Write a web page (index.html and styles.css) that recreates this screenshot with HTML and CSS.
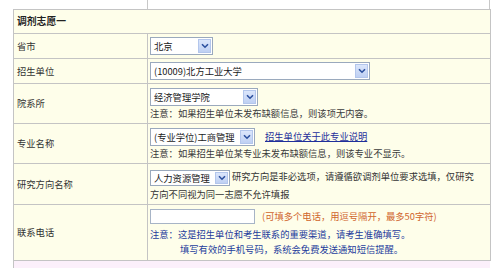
FILE: index.html
```html
<!DOCTYPE html>
<html lang="zh-CN">
<head>
<meta charset="utf-8">
<title>调剂志愿</title>
<link rel="stylesheet" href="styles.css">
</head>
<body>
<div class="page">
  <div class="stub"></div>
  <table class="form">
    <colgroup><col class="c1"><col class="c2"></colgroup>
    <tr class="r-head"><th colspan="2">调剂志愿一</th></tr>
    <tr class="r-s1">
      <td class="lbl">省市</td>
      <td class="val"><span class="sel w-prov"><span class="sel-text">北京</span><span class="btn"><svg width="8" height="6" viewBox="0 0 8 6"><path d="M1 1.2 L4 4.2 L7 1.2" fill="none" stroke="#2b4f9e" stroke-width="1.6"/></svg></span></span></td>
    </tr>
    <tr class="r-s2">
      <td class="lbl">招生单位</td>
      <td class="val"><span class="sel w-unit"><span class="sel-text">(10009)北方工业大学</span><span class="btn"><svg width="8" height="6" viewBox="0 0 8 6"><path d="M1 1.2 L4 4.2 L7 1.2" fill="none" stroke="#2b4f9e" stroke-width="1.6"/></svg></span></span></td>
    </tr>
    <tr class="r-m1">
      <td class="lbl">院系所</td>
      <td class="val">
        <div class="line"><span class="sel w-dept"><span class="sel-text">经济管理学院</span><span class="btn"><svg width="8" height="6" viewBox="0 0 8 6"><path d="M1 1.2 L4 4.2 L7 1.2" fill="none" stroke="#2b4f9e" stroke-width="1.6"/></svg></span></span></div>
        <div class="note">注意：如果招生单位未发布缺额信息，则该项无内容。</div>
      </td>
    </tr>
    <tr class="r-m2">
      <td class="lbl">专业名称</td>
      <td class="val">
        <div class="line"><span class="sel w-major"><span class="sel-text">(专业学位)工商管理</span><span class="btn"><svg width="8" height="6" viewBox="0 0 8 6"><path d="M1 1.2 L4 4.2 L7 1.2" fill="none" stroke="#2b4f9e" stroke-width="1.6"/></svg></span></span><a class="link" href="#">招生单位关于此专业说明</a></div>
        <div class="note">注意：如果招生单位某专业未发布缺额信息，则该专业不显示。</div>
      </td>
    </tr>
    <tr class="r-m3">
      <td class="lbl">研究方向名称</td>
      <td class="val wrap"><span class="sel w-dir"><span class="sel-text">人力资源管理</span><span class="btn"><svg width="8" height="6" viewBox="0 0 8 6"><path d="M1 1.2 L4 4.2 L7 1.2" fill="none" stroke="#2b4f9e" stroke-width="1.6"/></svg></span></span>研究方向是非必选项，请遵循欲调剂单位要求选填，仅研究方向不同视为同一志愿不允许填报</td>
    </tr>
    <tr class="r-tel">
      <td class="lbl">联系电话</td>
      <td class="val">
        <div class="line"><span class="input"></span><span class="hint">(可填多个电话，用逗号隔开，最多50字符)</span></div>
        <div class="blue">注意：这是招生单位和考生联系的重要渠道，请考生准确填写。</div>
        <div class="blue indent">填写有效的手机号码，系统会免费发送通知短信提醒。</div>
      </td>
    </tr>
  </table>
  <div class="tail"></div>
</div>
</body>
</html>
```

FILE: styles.css
```css
html, body {
  margin: 0;
  padding: 0;
  background: #ffffff;
}
body {
  font-family: "Noto Sans CJK SC", "Noto Sans", sans-serif;
  font-size: 9.3px;
  color: #333333;
}
.page {
  width: 500px;
  height: 274px;
  overflow: hidden;
}
.stub {
  height: 9px;
  margin-left: 147px;
  width: 341px;
  border-left: 1px solid #c8c8c8;
  border-right: 1px solid #c8c8c8;
}
.form {
  margin-left: 13px;
  width: 477px;
  border-collapse: collapse;
  table-layout: fixed;
  background: #fefeea;
}
.c1 { width: 134px; }
.c2 { width: 343px; }
.form th, .form td {
  border: 1px solid #c4c4c4;
  padding: 0;
  vertical-align: middle;
  text-align: left;
  line-height: 13px;
}
.form th {
  font-weight: bold;
  color: #222222;
  padding-left: 3px;
  font-size: 9.8px;
}
.lbl {
  padding-left: 3px !important;
}
.val {
  padding-left: 2px !important;
}
.r-head { height: 24px; }
.r-s1 { height: 25px; }
.r-s2 { height: 25px; }
.r-m1 { height: 40px; }
.r-m2 { height: 40px; }
.r-m3 { height: 41px; }
.r-tel { height: 56px; }

.line {
  display: flex;
  align-items: center;
}
.sel {
  display: inline-flex;
  align-items: center;
  justify-content: space-between;
  box-sizing: border-box;
  height: 18px;
  background: #ffffff;
  border: 1px solid #9aa9bd;
  color: #1a1a1a;
  vertical-align: middle;
}
.sel-text {
  padding-left: 3px;
  white-space: nowrap;
  line-height: 14px;
}
.btn {
  box-sizing: border-box;
  width: 13px;
  height: 14px;
  margin-right: 1px;
  background: linear-gradient(#dbe6fb, #bfd0f3);
  border: 1px solid #b3c6ec;
  display: flex;
  align-items: center;
  justify-content: center;
}
.w-prov { width: 63px; }
.w-unit { width: 220px; }
.w-dept { width: 108px; }
.w-major { width: 105px; }
.w-dir { width: 80px; height: 16px; margin-right: 2px; }
.w-dir .sel-text { line-height: 12px; }
.w-dir .btn { height: 12px; }

.link {
  margin-left: 10px;
  color: #1f2f9a;
  text-decoration: underline;
}
.note {
  color: #3a3a3a;
  margin-top: 1px;
}
.wrap {
  line-height: 17px !important;
  padding-top: 3px !important;
  padding-right: 10px !important;
}
.input {
  display: inline-block;
  box-sizing: border-box;
  width: 105px;
  height: 15px;
  background: #ffffff;
  border: 1px solid #a7b4c6;
}
.hint {
  margin-left: 7px;
  color: #d0652c;
}
.blue {
  color: #243c9c;
  line-height: 15px;
}
.r-tel .line { margin-bottom: 3px; }
.indent { padding-left: 30px; }
.tail {
  margin-left: 13px;
  width: 476px;
  height: 7px;
  background: #fcf0fb;
  border-left: 1px solid #c4c4c4;
}
```
